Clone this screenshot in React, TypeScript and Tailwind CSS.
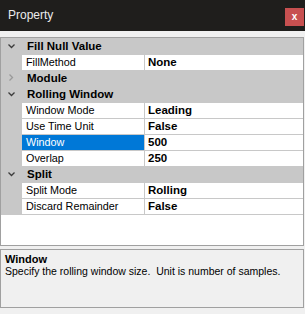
import React from "react";

type Row =
  | { kind: "cat"; label: string; open: boolean }
  | { kind: "prop"; label: string; value: string; selected?: boolean };

const rows: Row[] = [
  { kind: "cat", label: "Fill Null Value", open: true },
  { kind: "prop", label: "FillMethod", value: "None" },
  { kind: "cat", label: "Module", open: false },
  { kind: "cat", label: "Rolling Window", open: true },
  { kind: "prop", label: "Window Mode", value: "Leading" },
  { kind: "prop", label: "Use Time Unit", value: "False" },
  { kind: "prop", label: "Window", value: "500", selected: true },
  { kind: "prop", label: "Overlap", value: "250" },
  { kind: "cat", label: "Split", open: true },
  { kind: "prop", label: "Split Mode", value: "Rolling" },
  { kind: "prop", label: "Discard Remainder", value: "False" },
];

function Chevron({ open }: { open: boolean }) {
  if (open) {
    return (
      <svg width="21" height="16" viewBox="0 0 21 16">
        <path d="M7.5 6.5 L10.5 9.5 L13.5 6.5" fill="none" stroke="#3c3c3c" strokeWidth="1.3" />
      </svg>
    );
  }
  return (
    <svg width="21" height="16" viewBox="0 0 21 16">
      <path d="M8.5 4.5 L11.5 7.5 L8.5 10.5" fill="none" stroke="#9a9a9a" strokeWidth="1.3" />
    </svg>
  );
}

export default function App() {
  return (
    <div className="w-[305px] h-[314px] bg-[#f0f0f0] flex flex-col font-['Liberation_Sans',Arial,sans-serif] text-black overflow-hidden">
      <div className="h-[31px] bg-[#1f1e1c] flex items-start justify-between pl-2 pr-[1px]">
        <span className="text-[12px] leading-[31px] text-[#ececec]">Property</span>
        <button className="mt-[8px] w-[19px] h-[18px] bg-[#c75050] text-white text-[10px] font-bold leading-[18px] text-center">
          x
        </button>
      </div>

      <div className="mt-[6px] w-[304px] h-[209px] border border-[#a0a0a0] bg-white flex flex-col">
        {rows.map((r, i) =>
          r.kind === "cat" ? (
            <div key={i} className="h-[16px] flex bg-[#c8c8c8]">
              <div className="w-[21px] shrink-0">
                <Chevron open={r.open} />
              </div>
              <span className="pl-[5px] text-[11.5px] font-bold leading-[16px]">{r.label}</span>
            </div>
          ) : (
            <div key={i} className="h-[16px] flex bg-[#c8c8c8] pt-[1px]">
              <div className="w-[21px] shrink-0" />
              <div
                className={
                  r.selected
                    ? "w-[122px] h-[15px] bg-[#0078d7] text-white pl-[4px] text-[10.8px] leading-[15px]"
                    : "w-[122px] h-[15px] bg-white pl-[4px] text-[10.8px] leading-[15px]"
                }
              >
                {r.label}
              </div>
              <div className="ml-[1px] flex-1 h-[15px] bg-white pl-[3px] text-[11.5px] font-bold leading-[15px]">
                {r.value}
              </div>
            </div>
          )
        )}
        <div className="h-[1px] bg-[#c8c8c8]" />
      </div>

      <div className="mt-[3px] w-[304px] h-[59px] border border-[#a0a0a0] bg-[#f0f0f0] px-[4px] pt-[3px]">
        <div className="text-[11px] font-bold leading-[12px]">Window</div>
        <div className="text-[10.5px] leading-[12px] whitespace-pre">
          Specify the rolling window size.  Unit is number of samples.
        </div>
      </div>
    </div>
  );
}
